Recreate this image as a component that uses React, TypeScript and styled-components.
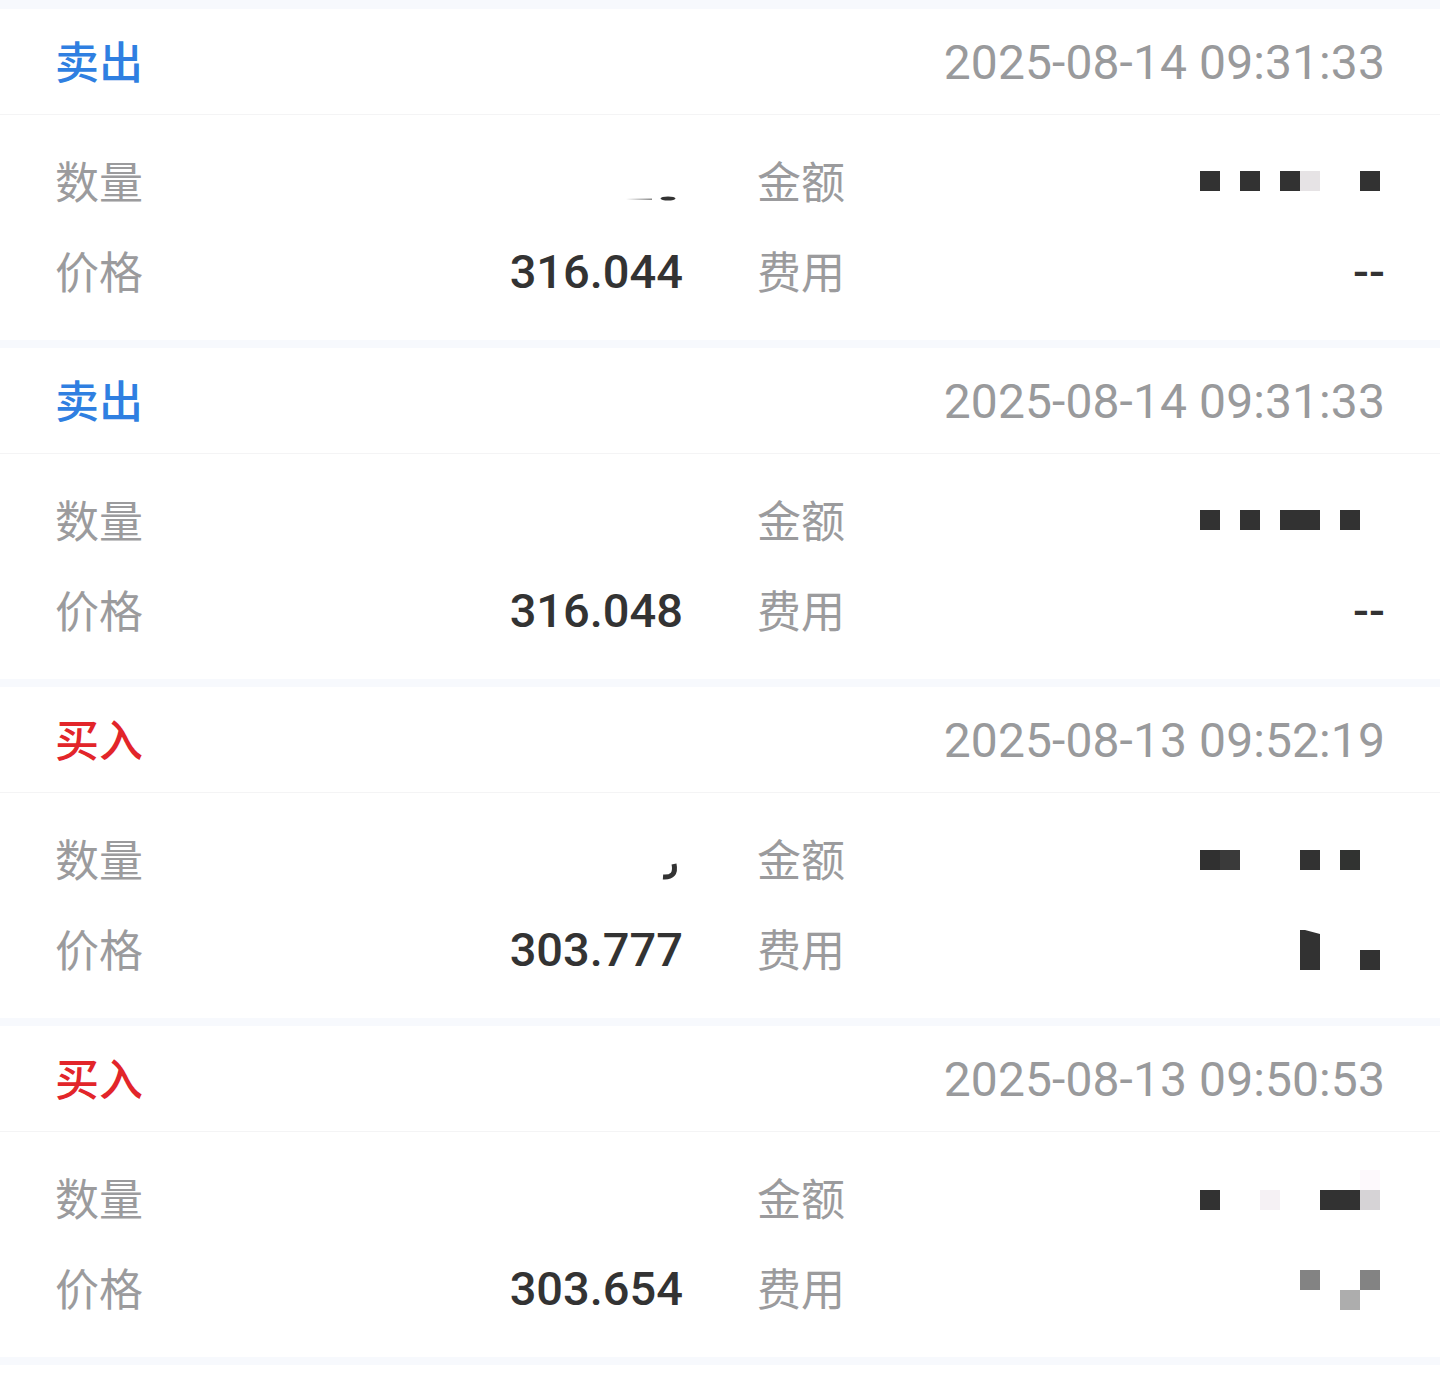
import React from 'react';
import styled, { createGlobalStyle } from 'styled-components';

type Cell = { x: number; y: number; w?: number; h?: number; c?: string };

type Value =
  | { kind: 'text'; text: string }
  | { kind: 'mosaic'; cells: Cell[]; notch?: boolean }
  | { kind: 'scrap'; variant: 'line' | 'curve' }
  | { kind: 'empty' };

type Trade = {
  side: 'sell' | 'buy';
  time: string;
  qty: Value;
  amount: Value;
  price: string;
  fee: Value;
};

const DARK = '#323232';

const trades: Trade[] = [
  {
    side: 'sell',
    time: '2025-08-14 09:31:33',
    qty: { kind: 'scrap', variant: 'line' },
    amount: {
      kind: 'mosaic',
      cells: [
        { x: 0, y: 19 },
        { x: 40, y: 19 },
        { x: 80, y: 19 },
        { x: 100, y: 19, c: '#e6e3e5' },
        { x: 160, y: 19 },
      ],
    },
    price: '316.044',
    fee: { kind: 'text', text: '--' },
  },
  {
    side: 'sell',
    time: '2025-08-14 09:31:33',
    qty: { kind: 'empty' },
    amount: {
      kind: 'mosaic',
      cells: [
        { x: 0, y: 19 },
        { x: 40, y: 19 },
        { x: 80, y: 19, w: 40 },
        { x: 140, y: 19 },
      ],
    },
    price: '316.048',
    fee: { kind: 'text', text: '--' },
  },
  {
    side: 'buy',
    time: '2025-08-13 09:52:19',
    qty: { kind: 'scrap', variant: 'curve' },
    amount: {
      kind: 'mosaic',
      cells: [
        { x: 0, y: 20, c: '#303030' },
        { x: 20, y: 20, c: '#3a3a3a' },
        { x: 100, y: 20 },
        { x: 140, y: 20, c: '#313331' },
      ],
    },
    price: '303.777',
    fee: {
      kind: 'mosaic',
      notch: true,
      cells: [
        { x: 100, y: 10, h: 40 },
        { x: 160, y: 30 },
      ],
    },
  },
  {
    side: 'buy',
    time: '2025-08-13 09:50:53',
    qty: { kind: 'empty' },
    amount: {
      kind: 'mosaic',
      cells: [
        { x: 160, y: 1, c: '#fdf9fc' },
        { x: 0, y: 21 },
        { x: 60, y: 21, c: '#f5f1f4' },
        { x: 120, y: 21, w: 40 },
        { x: 160, y: 21, c: '#d6d3d6' },
      ],
    },
    price: '303.654',
    fee: {
      kind: 'mosaic',
      cells: [
        { x: 100, y: 11, c: '#838383' },
        { x: 160, y: 11, c: '#838383' },
        { x: 140, y: 31, c: '#adadad' },
      ],
    },
  },
];

const GlobalStyle = createGlobalStyle`
  html, body {
    margin: 0;
    padding: 0;
    background: #f7f9fd;
  }
  body {
    font-family: Roboto, "Noto Sans CJK SC", sans-serif;
  }
`;

const List = styled.div`
  display: flex;
  flex-direction: column;
  gap: 8px;
  padding-top: 9px;
`;

const Card = styled.section`
  background: #fff;
  display: flex;
  flex-direction: column;
`;

const Header = styled.div`
  height: 106px;
  box-sizing: border-box;
  padding: 1px 55px 0;
  display: flex;
  align-items: center;
  justify-content: space-between;
  border-bottom: 1px solid #f4f4f5;
`;

const Side = styled.span<{ $buy: boolean }>`
  font-family: "Noto Sans CJK SC", sans-serif;
  font-size: 44px;
  font-weight: 500;
  margin-bottom: 5px;
  color: ${(p) => (p.$buy ? '#e2252a' : '#2f7fe1')};
`;

const Time = styled.span`
  font-family: Roboto, sans-serif;
  font-size: 48px;
  color: #999a9c;
  letter-spacing: 0.1px;
`;

const Body = styled.div`
  padding: 22px 55px 23px;
  display: grid;
  grid-template-columns: 1fr 1fr;
  column-gap: 74px;
`;

const Row = styled.div`
  height: 90px;
  display: flex;
  align-items: center;
  justify-content: space-between;
`;

const Label = styled.span`
  font-family: "Noto Sans CJK SC", sans-serif;
  font-size: 44px;
  color: #9b9b9d;
  margin-bottom: 4px;
`;

const Num = styled.span`
  font-family: Roboto, sans-serif;
  font-size: 47px;
  font-weight: 500;
  color: #333;
  margin-bottom: 2px;
`;

const Tail = styled.div`
  height: 22px;
  background: #fff;
`;

const Mosaic = ({ cells, notch }: { cells: Cell[]; notch?: boolean }) => (
  <svg width="185" height="60" viewBox="0 0 185 60">
    {cells.map((cell, i) => (
      <rect key={i} x={cell.x} y={cell.y} width={cell.w ?? 20} height={cell.h ?? 20} fill={cell.c ?? DARK} />
    ))}
    {notch && <polygon points="105,10 120,10 120,14" fill="#fff" />}
  </svg>
);

const Scrap = ({ variant }: { variant: 'line' | 'curve' }) => (
  <svg width="60" height="60" viewBox="0 0 60 60">
    <defs>
      <linearGradient id="fade" x1="0" x2="1">
        <stop offset="0" stopColor="#fff" />
        <stop offset="1" stopColor="#8a8a8a" />
      </linearGradient>
    </defs>
    {variant === 'line' ? (
      <>
        <rect x="3" y="46.5" width="26" height="1.5" fill="url(#fade)" />
        <ellipse cx="45" cy="46.5" rx="7.5" ry="2" fill="#333" />
      </>
    ) : (
      <path d="M51 34 Q54 48 40 47" stroke="#333" strokeWidth="5" fill="none" strokeLinecap="butt" />
    )}
  </svg>
);

const ValueView = ({ value }: { value: Value }) => {
  switch (value.kind) {
    case 'text':
      return <Num>{value.text}</Num>;
    case 'mosaic':
      return <Mosaic cells={value.cells} notch={value.notch} />;
    case 'scrap':
      return <Scrap variant={value.variant} />;
    default:
      return <span />;
  }
};

const TradeCard = ({ trade }: { trade: Trade }) => (
  <Card>
    <Header>
      <Side $buy={trade.side === 'buy'}>{trade.side === 'buy' ? '买入' : '卖出'}</Side>
      <Time>{trade.time}</Time>
    </Header>
    <Body>
      <Row>
        <Label>数量</Label>
        <ValueView value={trade.qty} />
      </Row>
      <Row>
        <Label>金额</Label>
        <ValueView value={trade.amount} />
      </Row>
      <Row>
        <Label>价格</Label>
        <Num>{trade.price}</Num>
      </Row>
      <Row>
        <Label>费用</Label>
        <ValueView value={trade.fee} />
      </Row>
    </Body>
  </Card>
);

export default function App() {
  return (
    <>
      <GlobalStyle />
      <List>
        {trades.map((t, i) => (
          <TradeCard key={i} trade={t} />
        ))}
        <Tail />
      </List>
    </>
  );
}
